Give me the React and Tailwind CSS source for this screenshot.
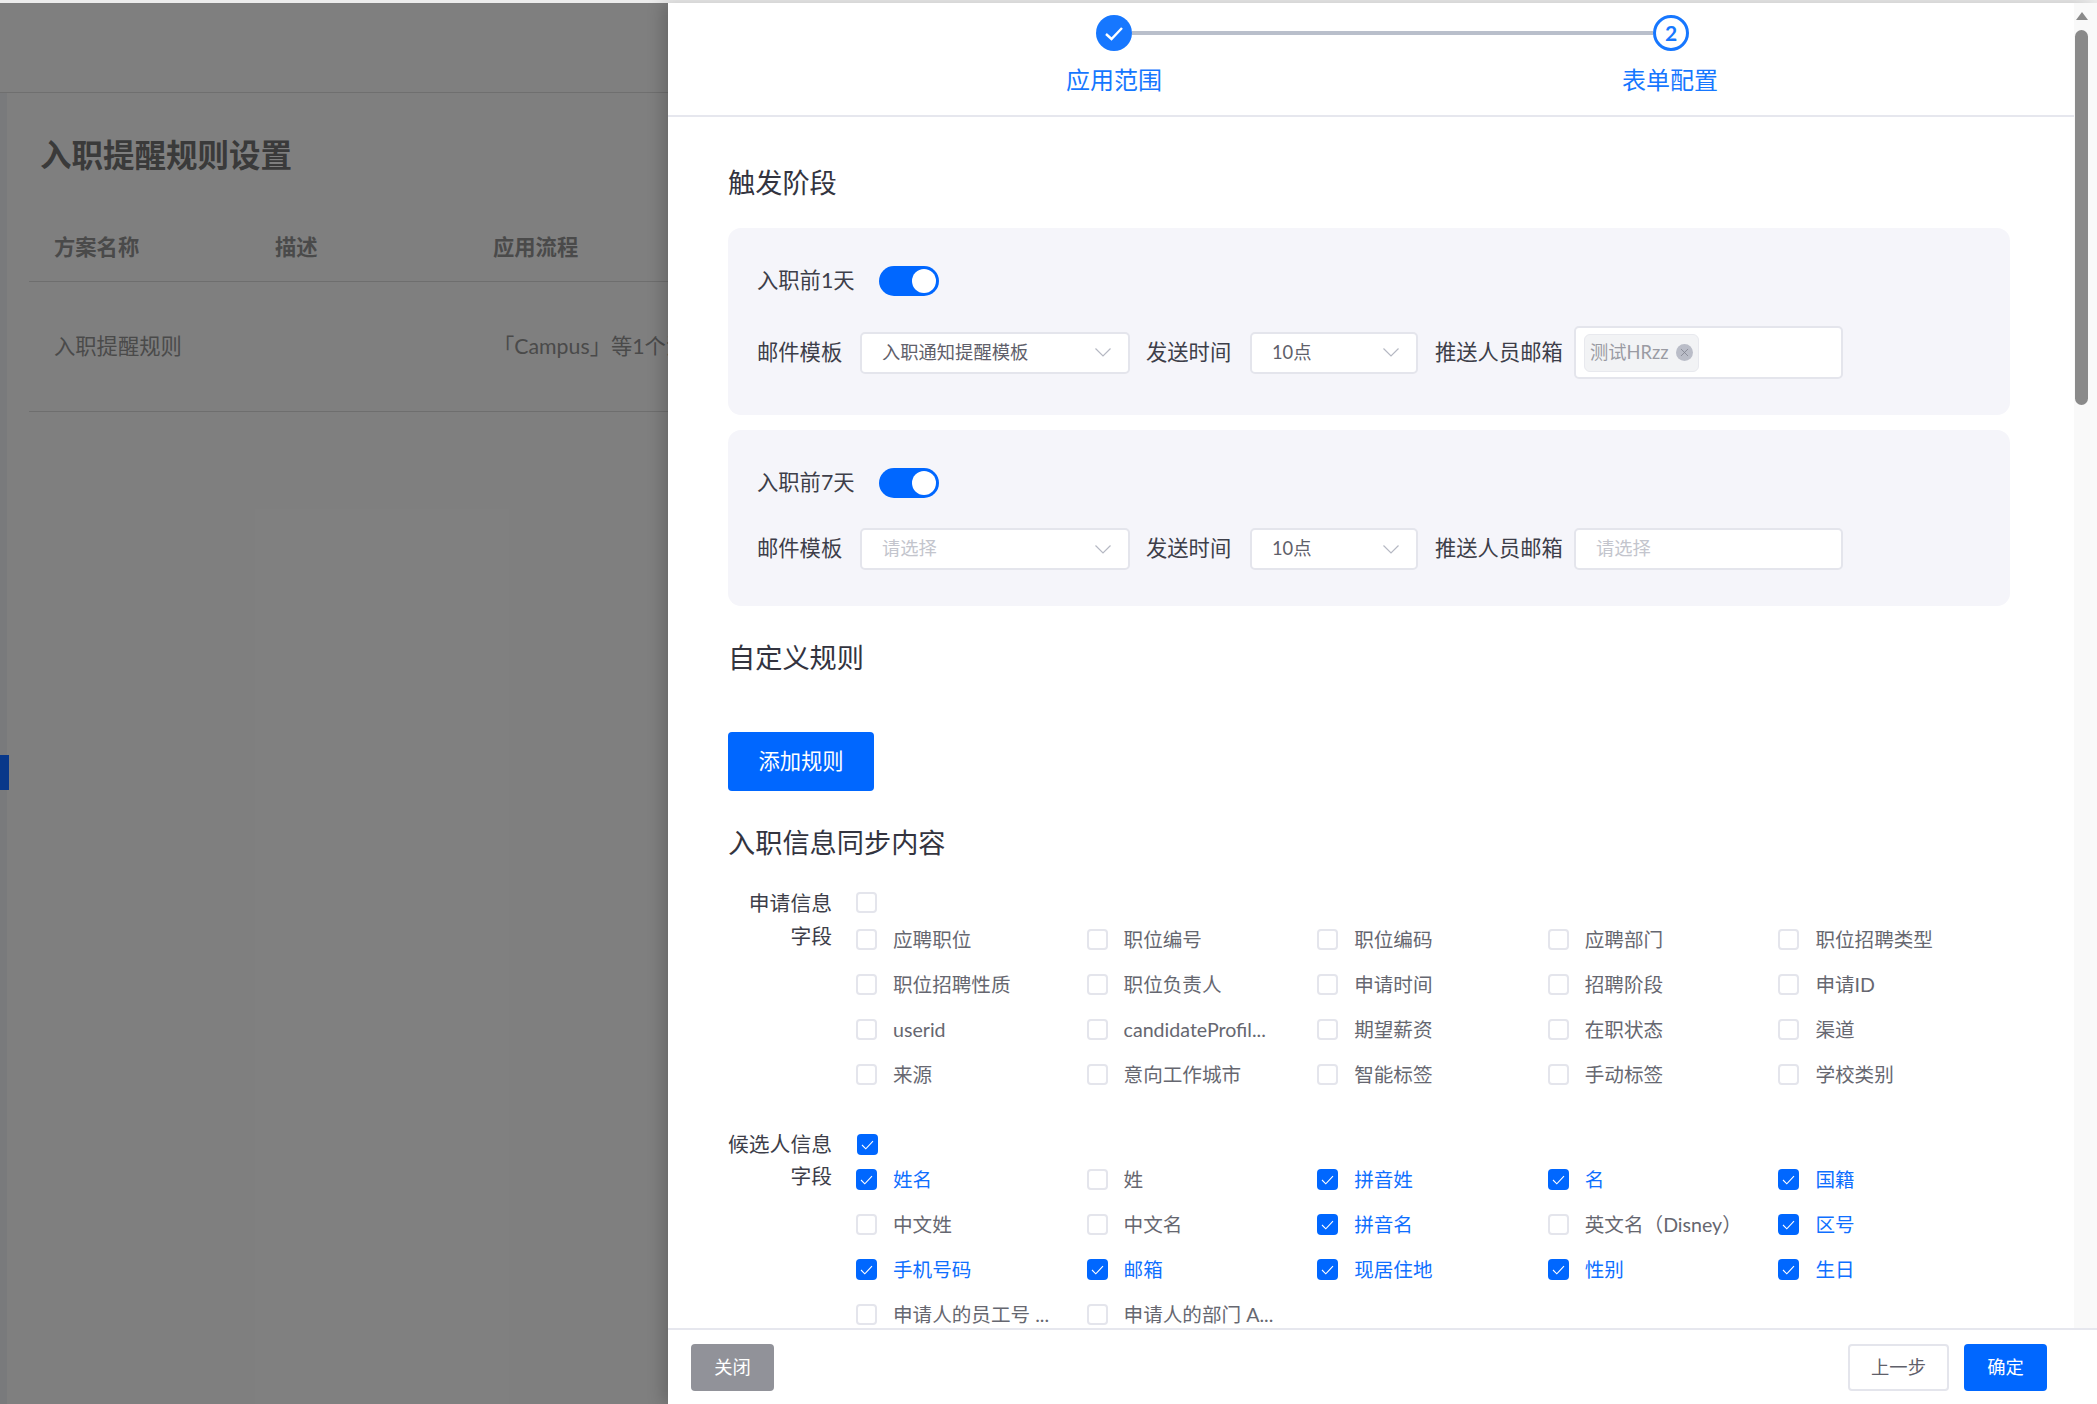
import { X } from "lucide-react";

const FONT = "font-['Lato','Noto_Sans_CJK_SC',sans-serif]";

const applyFields = [
  ["应聘职位"], ["职位编号"], ["职位编码"], ["应聘部门"], ["职位招聘类型"],
  ["职位招聘性质"], ["职位负责人"], ["申请时间"], ["招聘阶段"], ["申请ID"],
  ["userid"], ["candidateProfil..."], ["期望薪资"], ["在职状态"], ["渠道"],
  ["来源"], ["意向工作城市"], ["智能标签"], ["手动标签"], ["学校类别"],
];

const candidateFields = [
  ["姓名", true], ["姓"], ["拼音姓", true], ["名", true], ["国籍", true],
  ["中文姓"], ["中文名"], ["拼音名", true], ["英文名（Disney）"], ["区号", true],
  ["手机号码", true], ["邮箱", true], ["现居住地", true], ["性别", true], ["生日", true],
  ["申请人的员工号 ..."], ["申请人的部门 A..."],
];

function Checkbox({ checked }) {
  if (checked) {
    return (
      <span className="flex h-[21px] w-[21px] shrink-0 items-center justify-center rounded-[4px] bg-[#0067ff]">
        <svg width="13" height="10" viewBox="0 0 13 10" fill="none">
          <path d="M1 5l3.8 3.8L12 1.2" stroke="#fff" strokeWidth="1.1" />
        </svg>
      </span>
    );
  }
  return <span className="h-[21px] w-[21px] shrink-0 rounded-[4px] border-2 border-[#e4e5ec] bg-white"></span>;
}

function Field({ label, checked }) {
  return (
    <div className="flex h-[45px] w-[230.6px] items-center gap-4">
      <Checkbox checked={checked} />
      <span className={`whitespace-nowrap text-[19.6px] ${checked ? "text-[#0f6fff]" : "text-[#666770]"}`}>{label}</span>
    </div>
  );
}

function FieldGroup({ title, checked, fields, className, headClassName, labelClassName }) {
  return (
    <div className={`flex ${className}`}>
      <div className={`-mt-[6px] flex w-[104px] shrink-0 flex-col items-end text-[20.8px] text-[#3d3e49] ${labelClassName}`}>
        <span className="whitespace-nowrap">{title}</span>
        <span>字段</span>
      </div>
      <div className="ml-6">
        <div className={`flex h-[21px] ${headClassName}`}>
          <Checkbox checked={checked} />
        </div>
        <div className="grid grid-cols-5">
          {fields.map(([label, on]) => (
            <Field key={label} label={label} checked={on} />
          ))}
        </div>
      </div>
    </div>
  );
}

function Select({ value, placeholder, width }) {
  return (
    <div className={`flex h-[42px] items-center justify-between rounded-[5px] border-2 border-[#e4e5ec] bg-white pl-[20px] pr-[17px] text-[18.3px] ${width}`}>
      <span className={value ? "text-[#5f606a]" : "text-[#c3c5cd]"}>{value || placeholder}</span>
      <svg width="16" height="9" viewBox="0 0 16 9" fill="none">
        <path d="M.5.5L8 8l7.5-7.5" stroke="#b5b8c3" strokeWidth="1.2" />
      </svg>
    </div>
  );
}

function Toggle() {
  return (
    <div className="flex h-[30px] w-[60px] items-center justify-end rounded-full bg-[#0067ff] pr-[3px]">
      <span className="h-[24px] w-[24px] rounded-full bg-white"></span>
    </div>
  );
}

function Label({ children, className }) {
  return <span className={`whitespace-nowrap text-[21.3px] text-[#3d3e49] ${className}`}>{children}</span>;
}

function Heading({ children, className }) {
  return <h2 className={`text-[27.2px] leading-[36px] text-[#33343f] ${className}`}>{children}</h2>;
}

function StageCard({ title, template, children, className, rowHeight }) {
  return (
    <div className={`w-[1282px] rounded-[13px] bg-[#f5f5fa] pl-[29px] pt-[38px] ${className}`}>
      <div className="flex h-[30px] items-center">
        <Label className="w-[122px]">{title}</Label>
        <Toggle />
      </div>
      <div className={`mt-[30px] flex items-center ${rowHeight}`}>
        <Label className="w-[103px]">邮件模板</Label>
        <Select value={template} placeholder="请选择" width="w-[270px]" />
        <Label className="ml-4 w-[104px]">发送时间</Label>
        <Select value="10点" width="w-[168px]" />
        <Label className="ml-[17px] w-[139px]">推送人员邮箱</Label>
        {children}
      </div>
    </div>
  );
}

function Stepper() {
  return (
    <div className="h-[114px] shrink-0 border-b-2 border-[#e6e7ee] pt-3">
      <div className="flex items-center pl-[428px]">
        <span className="flex h-[36px] w-[36px] items-center justify-center rounded-full bg-[#1677ff]">
          <svg width="20" height="15" viewBox="0 0 20 15" fill="none">
            <path d="M2 8l5.5 5L18 2" stroke="#fff" strokeWidth="2.4" />
          </svg>
        </span>
        <span className="h-[4px] w-[521px] bg-[#b9bfcb]"></span>
        <span className="flex h-[36px] w-[36px] items-center justify-center rounded-full border-[3px] border-[#1677ff] text-[21px] font-bold text-[#1677ff]">
          2
        </span>
      </div>
      <div className="mt-[13px] flex gap-[460px] pl-[398px] text-[24px] leading-[32px] text-[#1677ff]">
        <span>应用范围</span>
        <span>表单配置</span>
      </div>
    </div>
  );
}

function Scrollbar() {
  return (
    <div className="flex w-[23px] shrink-0 flex-col bg-[#f9f9f9] pl-[1px]">
      <div className="ml-[1px] mt-[9px] h-0 w-0 border-x-[6px] border-b-[8px] border-x-transparent border-b-[#8a8a8a]"></div>
      <div className="mt-[10px] h-[375px] w-[13px] rounded-full bg-[#8a8a8a]"></div>
    </div>
  );
}

function BackgroundPage() {
  return (
    <div className="h-full bg-white">
      <div className="h-[90px] border-b border-[#dedede]"></div>
      <div className="flex">
        <div className="h-[1312px] w-[7px] shrink-0 bg-[#f2f4f8]"></div>
        <div className="flex-1 pl-[22px]">
          <h1 className="ml-[11px] mt-10 text-[31.5px] font-bold leading-[44px] text-[#757575]">入职提醒规则设置</h1>
          <div className="mt-[37px] flex h-[68px] items-center border-b border-[#dcdcdc] pl-[25px] text-[21.3px] font-bold text-[#959595]">
            <span className="w-[221px]">方案名称</span>
            <span className="w-[218px]">描述</span>
            <span>应用流程</span>
          </div>
          <div className="flex h-[130px] items-center border-b border-[#dcdcdc] pl-[25px] text-[21.3px] text-[#959595]">
            <span className="w-[439px]">入职提醒规则</span>
            <span className="whitespace-nowrap">「Campus」等1个流程</span>
          </div>
        </div>
      </div>
    </div>
  );
}

export default function App() {
  return (
    <div className={`relative h-[1404px] w-[2097px] overflow-hidden bg-[#ececec] pt-[3px] ${FONT}`}>
      <BackgroundPage />
      <div className="absolute inset-x-0 bottom-0 top-[3px] bg-black/50"></div>
      <div className="absolute left-0 top-[755px] h-[35px] w-[9px] bg-[#08388a]"></div>

      <div className="absolute bottom-0 left-[668px] right-0 top-[3px] flex flex-col rounded-tr-[12px] bg-white shadow-[-6px_0_16px_rgba(0,0,0,0.18)]">
        <div className="flex min-h-0 flex-1">
          <div className="flex w-[1406px] flex-col overflow-hidden">
            <Stepper />
            <div className="pl-[60px]">
              <Heading className="mt-12">触发阶段</Heading>

              <StageCard className="mt-[27px] h-[187px]" rowHeight="h-[53px]" title="入职前1天" template="入职通知提醒模板">
                <div className="flex h-[53px] w-[269px] items-center rounded-[5px] border-2 border-[#e4e5ec] bg-white pl-2">
                  <span className="flex h-[38px] w-[115px] items-center justify-between rounded-[6px] border border-[#e8e9ee] bg-[#f2f3f5] px-[5px] text-[18.3px] text-[#9a9ba3]">
                    测试HRzz
                    <span className="flex h-[17px] w-[17px] items-center justify-center rounded-full bg-[#babdc8]">
                      <X size={13} strokeWidth={1.4} className="text-[#7d808c]" />
                    </span>
                  </span>
                </div>
              </StageCard>

              <StageCard className="mt-[15px] h-[176px]" rowHeight="h-[42px]" title="入职前7天">
                <div className="flex h-[42px] w-[269px] items-center rounded-[5px] border-2 border-[#e4e5ec] bg-white pl-[20px] text-[18.3px] text-[#c3c5cd]">
                  请选择
                </div>
              </StageCard>

              <Heading className="mt-[34px]">自定义规则</Heading>
              <button className="mt-14 flex h-[59px] w-[146px] items-center justify-center rounded-[4px] bg-[#0067ff] text-[21.3px] text-white">
                添加规则
              </button>
              <Heading className="mt-[34px]">入职信息同步内容</Heading>

              <FieldGroup className="mt-[31px]" headClassName="mb-1" labelClassName="leading-[33px]" title="申请信息" fields={applyFields} />
              <FieldGroup className="mt-[37px]" headClassName="mb-[2px] ml-px" labelClassName="leading-[32px]" title="候选人信息" checked fields={candidateFields} />
            </div>
          </div>
          <Scrollbar />
        </div>

        <div className="flex h-[76px] shrink-0 justify-between border-t-2 border-[#e6e7ee] pl-[23px] pr-[50px] pt-[14px] text-[18.3px]">
          <button className="h-[47px] w-[83px] rounded-[4px] bg-[#919299] text-white">关闭</button>
          <div className="flex gap-[15px]">
            <button className="h-[47px] w-[101px] rounded-[4px] border-2 border-[#e4e5ec] bg-white text-[#5f606a]">上一步</button>
            <button className="h-[47px] w-[83px] rounded-[4px] bg-[#0067ff] text-white">确定</button>
          </div>
        </div>
      </div>
    </div>
  );
}
